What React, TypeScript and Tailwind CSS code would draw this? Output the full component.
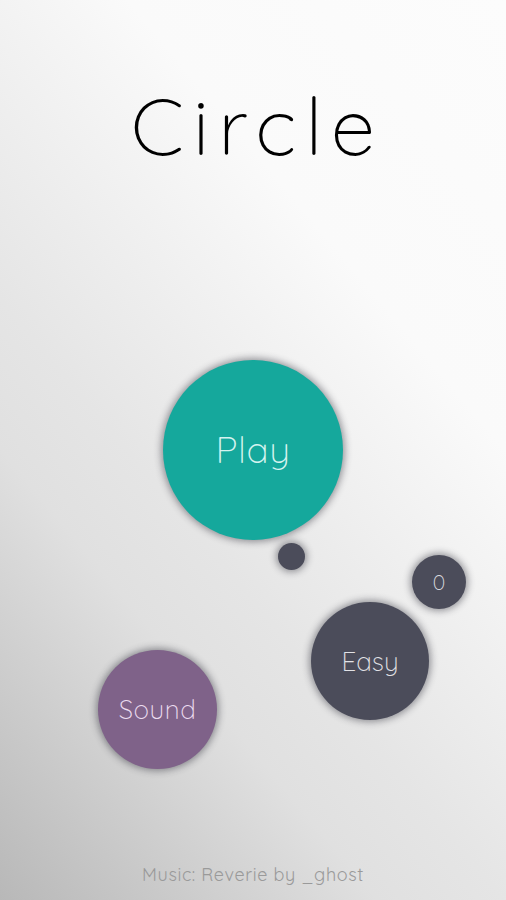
const font = "font-['Quicksand','Lato','Noto_Sans',sans-serif]";

const Bubble = ({
  label,
  className,
  textClass,
}: {
  label?: string;
  className: string;
  textClass?: string;
}) => (
  <button
    className={`absolute rounded-full flex items-center justify-center shadow-[0_0_7px_2px_rgba(40,40,50,0.45)] ${className}`}
  >
    {label && <span className={`${font} font-light ${textClass}`}>{label}</span>}
  </button>
);

export default function App() {
  return (
    <div className="relative w-full h-[900px] overflow-hidden flex flex-col items-center bg-[linear-gradient(50deg,#b8b8b8_0%,#e0e0e0_30%,#e5e5e5_40%,#f3f3f3_60%,#fafafa_70%,#fcfcfc_100%)]">
      <h1
        className={`${font} font-light text-[80px] leading-none text-black mt-[85px] tracking-[9px] pl-[9px]`}
      >
        Circle
      </h1>

      {/* free canvas of bubbles */}
      <div className="relative flex-1 w-full">
        <Bubble
          label="Play"
          className="left-[163px] top-[195px] w-[180px] h-[180px] bg-[#15a89c]"
          textClass="text-[37px] text-[#d4f3ef] tracking-[0.5px]"
        />
        <Bubble className="left-[278px] top-[378px] w-[27px] h-[27px] bg-[#4b4c5a]" />
        <Bubble
          label="0"
          className="left-[412px] top-[390px] w-[54px] h-[54px] bg-[#4b4c5a]"
          textClass="text-[22px] text-[#d8d8de]"
        />
        <Bubble
          label="Easy"
          className="left-[311px] top-[437px] w-[118px] h-[118px] bg-[#4b4c5a]"
          textClass="text-[26px] text-[#e2e2e6]"
        />
        <Bubble
          label="Sound"
          className="left-[98px] top-[485px] w-[119px] h-[119px] bg-[#7f6289]"
          textClass="text-[26px] text-[#ecdcf0] tracking-[0.5px]"
        />
      </div>

      <p className={`${font} text-[18px] text-[#9a9a9a] mb-[12px] tracking-[0.6px]`}>
        Music: Reverie by _ghost
      </p>
    </div>
  );
}
